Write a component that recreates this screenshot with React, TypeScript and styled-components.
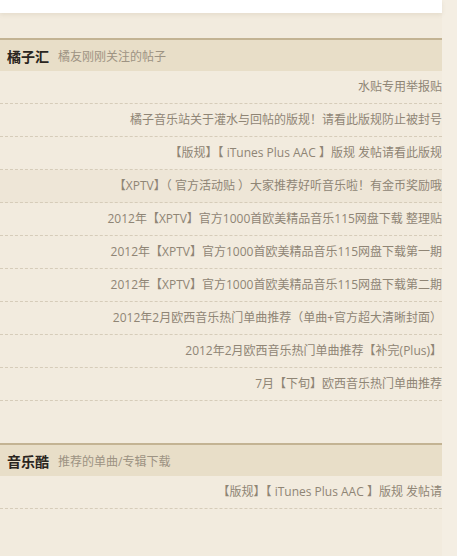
import React from 'react'
import styled, { createGlobalStyle } from 'styled-components'

const GlobalStyle = createGlobalStyle`
    html, body {
        margin: 0;
        padding: 0;
        background: #f4eee3;
        font-family: "Open Sans", "Noto Sans CJK SC", sans-serif;
    }
`

const Page = styled.div`
    width: 442px;
    min-height: 556px;
    background: #f2ebde;
    padding-bottom: 40px;
    box-sizing: border-box;
`

const TopPanel = styled.div`
    height: 13px;
    background: #ffffff;
    box-shadow: 0 2px 4px rgba(120, 100, 60, 0.1);
`

const Section = styled.section<{ gap: number }>`
    margin-top: ${(props) => props.gap}px;
`

const Header = styled.div`
    display: flex;
    align-items: center;
    gap: 9px;
    height: 31px;
    padding-left: 7px;
    border-top: 2px solid #c3b393;
    background: #e8dec8;
`

const Title = styled.h3`
    margin: 0;
    font-size: 14px;
    font-weight: bold;
    color: #2a2520;
`

const Subtitle = styled.span`
    font-size: 12px;
    color: #9d9383;
`

const List = styled.ul`
    margin: 0;
    padding: 0;
    list-style: none;
`

const Row = styled.li<{ active?: boolean }>`
    height: 32px;
    line-height: 32px;
    text-align: right;
    white-space: nowrap;
    overflow: hidden;
    font-size: 12px;
    color: #8f8575;
    border-bottom: 1px dashed #d6ccb9;
    background: ${(props) => (props.active ? '#eee6d7' : 'transparent')};
`

const followed = [
    '水贴专用举报贴',
    '橘子音乐站关于灌水与回帖的版规！请看此版规防止被封号',
    '【版规】【 iTunes Plus AAC 】版规 发帖请看此版规',
    '【XPTV】（ 官方活动贴 ）大家推荐好听音乐啦！有金币奖励哦',
    '2012年【XPTV】官方1000首欧美精品音乐115网盘下载 整理贴',
    '2012年【XPTV】官方1000首欧美精品音乐115网盘下载第一期',
    '2012年【XPTV】官方1000首欧美精品音乐115网盘下载第二期',
    '2012年2月欧西音乐热门单曲推荐（单曲+官方超大清晰封面）',
    '2012年2月欧西音乐热门单曲推荐【补完(Plus)】',
    '7月【下旬】欧西音乐热门单曲推荐',
]

const downloads = ['【版规】【 iTunes Plus AAC 】版规 发帖请']

export default function App() {
    return (
        <>
            <GlobalStyle />
            <Page>
                <TopPanel />

                <Section gap={25}>
                    <Header>
                        <Title>橘子汇</Title>
                        <Subtitle>橘友刚刚关注的帖子</Subtitle>
                    </Header>
                    <List>
                        {followed.map((text, i) => (
                            <Row key={text} active={i === 3}>
                                {text}
                            </Row>
                        ))}
                    </List>
                </Section>

                <Section gap={42}>
                    <Header>
                        <Title>音乐酷</Title>
                        <Subtitle>推荐的单曲/专辑下载</Subtitle>
                    </Header>
                    <List>
                        {downloads.map((text) => (
                            <Row key={text}>{text}</Row>
                        ))}
                    </List>
                </Section>
            </Page>
        </>
    )
}
